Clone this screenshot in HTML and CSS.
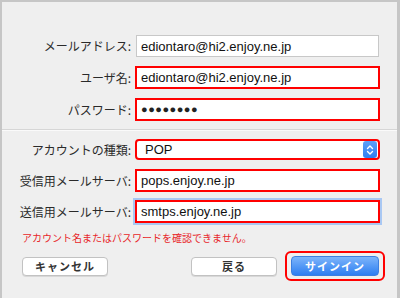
FILE: index.html
```html
<!DOCTYPE html>
<html lang="ja">
<head>
<meta charset="utf-8">
<link rel="stylesheet" href="styles.css">
</head>
<body>
<div class="window">
  <div class="group group-top">
    <div class="row">
      <div class="label">メールアドレス:</div>
      <div class="field plain">ediontaro@hi2.enjoy.ne.jp</div>
    </div>
    <div class="row">
      <div class="label">ユーザ名:</div>
      <div class="field marked">ediontaro@hi2.enjoy.ne.jp</div>
    </div>
    <div class="row">
      <div class="label">パスワード:</div>
      <div class="field marked dots">●●●●●●●●</div>
    </div>
  </div>
  <div class="sep"></div>
  <div class="group group-bottom">
    <div class="row">
      <div class="label">アカウントの種類:</div>
      <div class="field marked select">
        <span class="select-text">POP</span>
        <span class="stepper">
          <svg width="12" height="16" viewBox="0 0 12 16"><path d="M3.5 6.5 L6 4 L8.5 6.5 M3.5 9.5 L6 12 L8.5 9.5" fill="none" stroke="#fff" stroke-width="1.4" stroke-linecap="round" stroke-linejoin="round"/></svg>
        </span>
      </div>
    </div>
    <div class="row">
      <div class="label">受信用メールサーバ:</div>
      <div class="field marked">pops.enjoy.ne.jp</div>
    </div>
    <div class="row">
      <div class="label">送信用メールサーバ:</div>
      <div class="field marked focused">smtps.enjoy.ne.jp</div>
    </div>
  </div>
  <div class="error">アカウント名またはパスワードを確認できません。</div>
  <div class="buttons">
    <div class="btn">キャンセル</div>
    <div class="btn back">戻る</div>
    <div class="primary-wrap"><div class="btn primary">サインイン</div></div>
  </div>
</div>
</body>
</html>
```

FILE: styles.css
```css
html, body {
  margin: 0;
  padding: 0;
}
body {
  width: 400px;
  height: 298px;
  overflow: hidden;
  font-family: "Noto Sans CJK JP", "Liberation Sans", sans-serif;
}
.window {
  box-sizing: border-box;
  width: 400px;
  height: 298px;
  background: #efefef;
  border-top: 2px solid #c6c6c6;
  border-left: 2px solid #c6c6c6;
  border-right: 3px solid #c6c6c6;
  display: flex;
  flex-direction: column;
}
.group {
  display: flex;
  flex-direction: column;
}
.group-top {
  padding-top: 32px;
  gap: 9px;
}
.row {
  display: flex;
  align-items: center;
  height: 23px;
}
.label {
  width: 129px;
  text-align: right;
  font-size: 12px;
  color: #2a2a2a;
  line-height: 23px;
  padding-right: 4px;
}
.field {
  box-sizing: border-box;
  width: 245px;
  height: 23px;
  background: #fff;
  font-family: "Liberation Sans", sans-serif;
  font-size: 13px;
  color: #111;
  padding-left: 4px;
  line-height: 19px;
  display: flex;
  align-items: center;
}
.plain {
  border: 1px solid #c8c8c8;
  margin: 1px 0 0 1px;
  width: 243px;
  height: 22px;
  padding-left: 4px;
}
.marked {
  border: 2px solid #ff0000;
}
.dots {
  font-size: 11px;
  letter-spacing: 0.5px;
  color: #222;
}
.sep {
  margin-top: 8px;
  height: 1px;
  background: #d6d6d6;
  border-bottom: 1px solid #fafafa;
}
.group-bottom {
  padding-top: 7px;
  gap: 8px;
}
.group-bottom .row {
  height: 23px;
}
.select {
  border-radius: 4px;
  height: 21px;
  padding-left: 8px;
  padding-right: 1px;
  justify-content: space-between;
}
.select-text {
  font-size: 13px;
}
.stepper {
  width: 14px;
  height: 17px;
  border-radius: 3px;
  background: linear-gradient(#5fa0f7, #2f7ef0);
  display: flex;
  align-items: center;
  justify-content: center;
}
.focused {
  box-shadow: 0 0 0 2px #a9c8f3;
}
.error {
  margin-top: 8px;
  padding-left: 20px;
  font-size: 10px;
  color: #e8262a;
  line-height: 14px;
}
.buttons {
  display: flex;
  align-items: center;
  padding-left: 20px;
  margin-top: 6px;
}
.btn {
  box-sizing: border-box;
  width: 86px;
  height: 19px;
  background: #fff;
  border: 1px solid #c2c2c2;
  border-radius: 4px;
  font-size: 11px;
  font-weight: 700;
  letter-spacing: 1px;
  color: #333;
  display: flex;
  align-items: center;
  justify-content: center;
  box-shadow: 0 1px 0 #d8d8d8;
}
.back {
  margin-left: auto;
}
.primary-wrap {
  margin-left: 8px;
  margin-right: 12px;
  border: 2px solid #ff0000;
  border-radius: 6px;
  padding: 3px 4px;
}
.primary {
  width: 88px;
  height: 20px;
  background: linear-gradient(#7db4fa, #2d7ef1);
  border: 1px solid #3d7fe0;
  color: #fff;
  box-shadow: none;
}
```
